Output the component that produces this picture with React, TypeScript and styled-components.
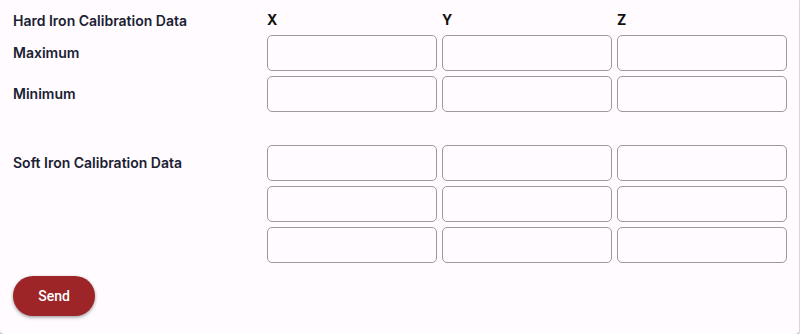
import React from 'react'
import styled, { createGlobalStyle } from 'styled-components'

const GlobalStyle = createGlobalStyle`
  html, body {
    margin: 0;
    padding: 0;
    background: #ffffff;
  }
  * {
    box-sizing: border-box;
  }
`

const Card = styled.div`
  width: 799px;
  height: 338px;
  margin-top: -4px;
  padding: 16px 13px 0 13px;
  background: #fffbfe;
  border-radius: 4px;
  box-shadow: 0 1px 2px rgba(0, 0, 0, 0.3), 0 1px 3px 1px rgba(0, 0, 0, 0.12);
  font-family: Inter, 'Liberation Sans', sans-serif;
  color: #1a2133;
`

const Grid = styled.div`
  display: grid;
  grid-template-columns: 249px repeat(3, 170px);
  column-gap: 5px;
  row-gap: 5px;
  align-items: center;
`

const Label = styled.div`
  font-size: 14px;
  font-weight: 600;
  line-height: 16px;
`

const AxisHead = styled.div`
  font-size: 14px;
  font-weight: 700;
  line-height: 16px;
  height: 18px;
  color: #111;
`

const Field = styled.input`
  display: block;
  width: 170px;
  height: 36px;
  margin: 0;
  padding: 0 8px;
  background: #fffbfe;
  border: 1px solid #9c9a9e;
  border-radius: 5px;
  outline: none;
`

const Spacer = styled.div`
  grid-column: 1 / -1;
  height: 23px;
`

const Footer = styled.div`
  padding-top: 13px;
`

const SendButton = styled.button`
  width: 82px;
  height: 40px;
  border: none;
  border-radius: 20px;
  background: #9d2527;
  color: #ffffff;
  font-family: Roboto, 'Liberation Sans', sans-serif;
  font-size: 14px;
  font-weight: 500;
  box-shadow: 0 1px 3px rgba(0, 0, 0, 0.3), 0 2px 4px rgba(0, 0, 0, 0.15);
  cursor: pointer;
`

const Row = ({ label }: { label?: string }) => (
  <>
    <Label>{label}</Label>
    <Field />
    <Field />
    <Field />
  </>
)

export default function App() {
  return (
    <>
      <GlobalStyle />
      <Card>
        <Grid>
          <Label>Hard Iron Calibration Data</Label>
          <AxisHead>X</AxisHead>
          <AxisHead>Y</AxisHead>
          <AxisHead>Z</AxisHead>
          <Row label="Maximum" />
          <Row label="Minimum" />
          <Spacer />
          <Row label="Soft Iron Calibration Data" />
          <Row />
          <Row />
        </Grid>
        <Footer>
          <SendButton>Send</SendButton>
        </Footer>
      </Card>
    </>
  )
}
